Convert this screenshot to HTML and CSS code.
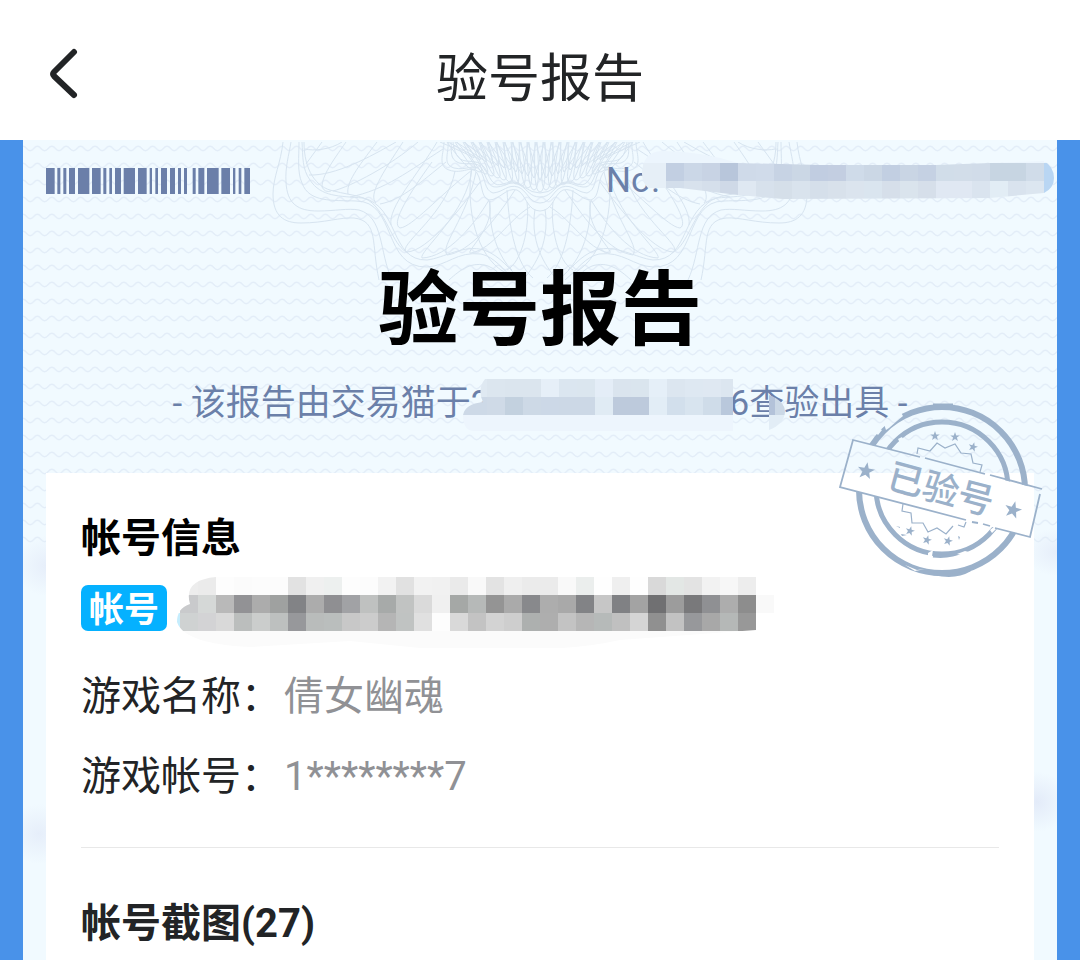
FILE: index.html
```
<!DOCTYPE html>
<html lang="zh-CN">
<head>
  <meta charset="UTF-8" />
  <meta name="viewport" content="width=device-width, initial-scale=1.0">
  <title>验号报告</title>
  <link rel="stylesheet" href="styles.css">
</head>
<body>
  <header class="navbar">
    <button type="button" class="back" aria-label="返回">
      <svg width="32" height="52" viewBox="0 0 32 52"><path d="M27 4 L7 24 Q5 26 7 28 L27 47" /></svg>
    </button>
    <h1>验号报告</h1>
  </header>

  <main class="report">
    <svg class="waves" aria-hidden="true">
      <defs>
        <pattern id="wave" width="14.4" height="17" patternUnits="userSpaceOnUse">
          <path d="M-3.600 8.500 Q0 4 3.600 8.500 T10.800 8.500 T18 8.500" />
        </pattern>
      </defs>
      <rect width="100%" height="100%" fill="url(#wave)" />
    </svg>
    <svg class="rosette" width="540" height="138" viewBox="270 142 540 138" aria-hidden="true">
      <defs>
        <g id="half">
          <!-- outer border -->
          <path d="M283 142 C281 162 273 178 273 194 C273 216 284 223 301 223 C325 223 340 217 354 218 C379 221 371 244 379 280" />
          <path d="M291 142 C289 155 285 167 286 182 C287 204 298 211 318 211 C335 211 348 208 359 210 C384 217 379 252 392 280" />
          <path d="M299 142 C299 157 297 172 302 183 C309 203 333 200 356 201 C397 201 382 268 427 267 C447 266 457 251 481 254 C495 257 503 270 515 280" />
          <path d="M302 142 C303 157 302 169 310 180 C321 197 339 196 363 198 C399 206 390 261 427 260 C444 258 464 244 484 250 C501 256 508 269 522 280" />
          <path d="M304 142 C304 170 316 188 334 191 C352 196 367 195 376 207 C390 224 394 246 408 253" />
          <path d="M449 280 C461 269 472 261 488 266 Q498 270 504 280" />
          <!-- inner border -->
          <path d="M444 142 C444 153 437 166 449 170 C463 175 472 164 477 173 C483 183 480 197 489 200 C500 200 506 187 517 190 C526 194 527 211 540 211" />
          <path d="M448 142 C449 154 442 164 454 168 C467 171 474 163 480 170 C486 179 484 190 493 193 C504 192 507 184 518 187 C527 190 529 203 540 203" />
          <path d="M451 142 C452 151 449 159 459 163 C469 165 478 161 482 169 C487 178 488 188 497 187 C507 186 510 180 520 185 C528 190 530 197 540 197" />
          <path d="M453 142 C454 151 457 160 466 161 C475 162 481 161 486 170 C491 181 494 187 503 184 C513 181 517 181 524 187 Q532 193 540 193" />
          <!-- lattice between the borders -->
          <path d="M342 142 C330 150 313 151 305 149" />
          <path d="M322 142 L306 164" />
          <path d="M346 142 C332 162 322 176 322 187 Q325 193 331 191" />
          <path d="M396 142 C370 157 335 176 309 175" />
          <path d="M377 142 C357 168 346 183 348 194" />
          <path d="M418 142 C390 166 352 186 333 191" />
          <path d="M403 142 C382 174 368 195 376 203" />
          <path d="M443 149 C409 171 385 190 350 197" />
          <path d="M437 142 C417 176 388 207 391 225" />
          <path d="M446 162 C422 181 402 200 380 204" />
          <path d="M432 162 C406 198 391 224 400 228 C412 227 439 196 472 170" />
          <path d="M455 171 C447 215 395 247 407 252 C428 251 461 208 480 182" />
          <path d="M472 168 C468 213 418 252 422 258 C448 257 474 225 489 200" />
          <path d="M476 172 C466 220 440 245 447 255 C470 252 494 222 515 190" />
          <path d="M489 201 C497 226 463 254 471 253 C493 249 508 220 530 207" />
          <path d="M471 172 C466 220 481 262 508 274" />
          <path d="M490 201 C488 229 499 258 512 270" />
          <path d="M507 190 C509 231 517 265 533 278" />
          <path d="M527 202 C530 227 522 262 507 270" />
          <path d="M545 209 C551 247 530 271 523 280" />
        </g>
      </defs>
      <use href="#half" />
      <use href="#half" transform="translate(1080 0) scale(-1 1)" />
      <g id="rays"></g>
    </svg>

    <div class="report-top">
      <svg class="barcode" width="204" height="26" viewBox="0 0 612 78" role="img" aria-label="条形码">
        <path d="M0 0h26v78h-26zM34 0h9v78h-9zM52 0h9v78h-9zM69 0h18v78h-18zM96 0h34v78h-34zM138 0h26v78h-26zM172 0h9v78h-9zM190 0h8v78h-8zM207 0h18v78h-18zM233 0h34v78h-34zM276 0h26v78h-26zM311 0h7v78h-7zM328 0h8v78h-8zM345 0h18v78h-18zM372 0h15v78h-15zM396 0h9v78h-9zM414 0h9v78h-9zM440 0h9v78h-9zM457 0h18v78h-18zM483 0h35v78h-35zM526 0h26v78h-26zM561 0h7v78h-7zM578 0h8v78h-8zM595 0h17v78h-17z" />
      </svg>
      <div class="serial">No.
        <svg class="mosaic" id="serialMosaic" width="420" height="60" viewBox="640 145 420 60" aria-hidden="true">
          <clipPath id="serialClip"><path d="M642 174 Q642 152 662 151 Q700 151 738 163 L820 165 L936 165 L990 163 L1044 161 Q1054 167 1054 178 Q1054 188 1044 193 L990 198 L783 199 L738 195 L680 188 L648 188 Q642 182 642 174" /></clipPath>
        </svg>
      </div>
    </div>

    <h2 class="report-title">验号报告</h2>
    <p class="issued">- 该报告由交易猫于2<span class="hidden-date">
      <svg class="mosaic" id="dateMosaic" width="340" height="60" viewBox="450 375 340 60" aria-hidden="true">
        <clipPath id="dateClip"><path d="M484 379 H732 V431 H472 Q462 430 462 415 Q464 404 482 402 Q476 389 484 379 M768 395 Q784 401 784 412 Q783 424 768 430z" /></clipPath>
      </svg></span>6查验出具 -</p>

    <section class="card">
      <svg class="stamp" width="220" height="190" viewBox="830 395 220 190" aria-hidden="true">
        <defs>
          <mask id="worn">
            <rect x="830" y="395" width="220" height="190" fill="#fff" />
            <path fill="#000" d="M853 440 L1042 490 L1030 537 L840 487z" />
            <path fill="#000" d="M884 424 L889 416 L891 419 L896 414 L900 411 L903 416 L897 421 L889 428 L886 430z M876 433l4-4 2 1-4 5z M898 439l4-2 2 4-4 2z M928 553l5-3-1 6-4 3z M957 554l8-3 4 1-8 3z M990 530l5-4 1 3-4 4z M1007 433l4-3-1 4z M905 565l12 5 8-1-10 2z M987 547l4-5 2 2-4 5z" />
          </mask>
          <path id="star" d="M0 -9 L2.200 -2.900 L8.600 -2.800 L3.500 1.100 L5.300 7.300 L0 3.700 L-5.300 7.300 L-3.500 1.100 L-8.600 -2.800 L-2.200 -2.900z" />
        </defs>
        <g mask="url(#worn)" class="rings">
          <circle cx="942" cy="490" r="83" stroke-width="6" />
          <circle cx="942" cy="488" r="66" stroke-width="5" />
          <path stroke-width="3" d="M905 563 Q922 573 942 575 Q958 577 970 570 M933 405 L953 405 M933 556 Q950 558 964 551" />
        </g>
        <path class="thin" d="M917 454 L918 448 L930 451 L937 443 L945 448 L955 444 L961 453 L971 454 L973 463 L982 465 L980 472 M903 504 L902 511 L911 513 L912 523 L923 523 L928 532 L937 528 L946 534 L953 526 M958 525 L964 527 L966 522" />
        <path class="thin frame" d="M1040 494 L1030 537 L995 528 M990 526 L983 524 M978 523 L972 522 M966 520 L840 487 L853 440 L920 457 M925 458 L985 474 M990 475 L1042 489" />
        <g class="solid">
          <use href="#star" transform="translate(866 471) rotate(10)" />
          <use href="#star" transform="translate(1013 510) rotate(15)" />
          <use href="#star" transform="translate(935 436) scale(.55)" />
          <use href="#star" transform="translate(955 437) scale(.55)" />
          <use href="#star" transform="translate(973 447) rotate(15) scale(.55)" />
          <use href="#star" transform="translate(910 531) rotate(15) scale(.55)" />
          <use href="#star" transform="translate(927 540) rotate(15) scale(.55)" />
          <use href="#star" transform="translate(948 541) rotate(15) scale(.55)" />
          <path d="M896 526l4 1v1zM901 534l6 1-5 1zM958 536l2 1-1 3z" />
          <text x="941" y="502" text-anchor="middle" transform="rotate(15 941 489)">已验号</text>
        </g>
      </svg>

      <h3 class="black">帐号信息</h3>
      <div class="account">
        <span class="badge">帐号</span>
        <svg class="account-mosaic" id="accountMosaic" width="620" height="80" viewBox="176 568 620 80" aria-hidden="true">
          <clipPath id="accountClip"><path d="M177 622 Q177 608 190 604 Q183 580 216 577 H780 V626 L756 630 L620 640 Q580 649 530 649 L420 648 L350 641 L250 647 Q184 644 177 622" /></clipPath>
        </svg>
      </div>
      <dl class="info">
        <div><dt>游戏名称：</dt><dd>倩女幽魂</dd></div>
        <div><dt>游戏帐号：</dt><dd>1********7</dd></div>
      </dl>
      <hr>
      <h3>帐号截图(27)</h3>
    </section>
  </main>
  <script src="script.js"></script>
</body>
</html>
```

FILE: styles.css
```
* {
  box-sizing: border-box;
}
body {
  margin: 0;
  min-height: 100vh;
  display: flex;
  flex-direction: column;
  background: #4992e9;
  color: #222426;
  font-family: Roboto, "Noto Sans CJK SC", sans-serif;
}
h1, h2, h3, p, dl, dd {
  margin: 0;
}
.navbar {
  display: grid;
  grid-template-columns: 80px 1fr 80px;
  align-items: center;
  height: 140px;
  padding-top: 20px;
  background: #fff;
}
.navbar h1 {
  font-size: 52px;
  font-weight: 400;
  line-height: 80px;
  text-align: center;
}
.back {
  height: 64px;
  padding: 0 0 12px 47px;
  border: none;
  background: none;
  cursor: pointer;
}
.back svg {
  display: block;
}
.back path {
  fill: none;
  stroke: #222426;
  stroke-width: 6;
  stroke-linecap: round;
}

.report {
  position: relative;
  flex: 1;
  display: flex;
  flex-direction: column;
  margin: 0 23px;
  padding: 21px 23px 0;
  background:
    radial-gradient(ellipse 32px 30px at 24px 426px, #e6eefa, transparent) no-repeat,
    radial-gradient(ellipse 32px 30px at 16px 694px, #e6eefa, transparent) no-repeat,
    radial-gradient(ellipse 32px 24px at 100% 412px, #e6eefa, transparent) no-repeat,
    radial-gradient(ellipse 32px 30px at calc(100% - 20px) 662px, #e3ebf9, transparent) no-repeat,
    #f1faff;
}
.waves {
  position: absolute;
  top: 0;
  left: 0;
  width: 100%;
  height: 407px;
}
.waves path {
  fill: none;
  stroke: #e3edf8;
  stroke-width: 1.3;
}
.rosette {
  position: absolute;
  top: 2px;
  left: calc(50% - 270px);
  fill: none;
  stroke: #d7e4f0;
}
.report-top {
  position: relative;
  display: flex;
  justify-content: space-between;
  align-items: center;
  height: 40px;
}
.barcode {
  fill: #6b7fa9;
}
.serial {
  position: relative;
  width: 428px;
  font-size: 35px;
  line-height: 36px;
  color: #6b80a9;
}
.mosaic {
  position: absolute;
}
.serial .mosaic {
  left: 34px;
  top: -18px;
}
.report-title {
  position: relative;
  margin-top: 60px;
  font-size: 81px;
  line-height: 100px;
  text-align: center;
  color: #000;
}
.issued {
  position: relative;
  height: 50px;
  margin-top: 18px;
  font-size: 35px;
  line-height: 50px;
  text-align: center;
  white-space: nowrap;
  color: #6b80a9;
}
.hidden-date {
  position: relative;
  display: inline-block;
  width: 239px;
}
.hidden-date .mosaic {
  left: -40px;
  top: -40px;
}

.card {
  position: relative;
  flex: 1;
  margin-top: 44px;
  padding: 35px 35px 0;
  background: #fff;
}
.card h3 {
  font-size: 40px;
  line-height: 62px;
}
.card .black {
  color: #000;
}
.stamp {
  position: absolute;
  top: -78px;
  right: -16px;
}
.rings, .thin {
  fill: none;
  stroke: #9bb1ca;
}
.thin {
  stroke-width: 1.2;
}
.frame {
  stroke-width: 1.8;
}
.solid {
  fill: #9bb1ca;
  font-size: 36px;
  font-weight: 500;
}
.account {
  position: relative;
  margin-top: 15px;
  height: 46px;
}
.badge {
  display: block;
  width: 86px;
  height: 46px;
  border-radius: 7px;
  background: #05b1ff;
  color: #fff;
  font-size: 35px;
  font-weight: 700;
  line-height: 52px;
  text-align: center;
}
.account-mosaic {
  position: absolute;
  left: 95px;
  top: -17px;
}
.info {
  margin-top: 26px;
  font-size: 40px;
  line-height: 80px;
}
.info div {
  display: flex;
  gap: 3px;
}
.info dd {
  color: #909195;
}
hr {
  height: 1px;
  margin: 30px 0 45px;
  border: none;
  background: #e8e8e8;
}
```

FILE: script.js
```
const CELL = 18;

const serialRows = [
  Array(23).fill('ecf5fd'),
  'e6eff7 e6eff7 c2cfe2 cbd7e7 c8d3e4 b8c6db cfdae9 d0dbea c7d3e4 cbd7e5 c1cde1 c3cee1 cfdbe9 cbd7e5 c2cfe2 c9d5e4 c5d1e3 d1dde9 d2dde9 d1dce9 c7d5e2 c7d5e2 d0dce9 b9d6f3'.split(' '),
  'e6eff7 e6eff7 d3deeb d8e2ed d5dfeb cfd9e7 dfe8f2 d7e1ec d5dfe9 d9e3ed d5dfea d8e1eb dbe4ee dae5ef d6dfea dae4ed d6dfea e0e8f3 e0e8f3 dae4ef e2edf5 d9e3ee dce6f0 b9d6f3'.split(' ')
];

const dateRows = [
  'dfe9f2 dfe9f2 dce6ef dbe5ee dbe5ee e6eff8 dbe6f0 dbe6ef e4edf7 dae4ee dae5ee e5eff8 dce6f0 dee8f2 dfe8f2 dce6f0 edf5fd b3c2d9 cbd8e6'.split(' '),
  'cdd9e7 cdd9e7 cfdae7 c3d1df cdd9e6 ccd8e7 ccd8e6 ccd8e6 e0ebf4 bdcadc bdcadc e2edf6 d2dfec d8e4ef cfdce9 b9c8dc edf5fd b3c2d9 cbd8e6'.split(' '),
  Array(17).fill('edf5fd').concat('e2edf6', 'e2edf6')
];

const accountRows = [
  'ededed ebebeb fdfdfd fbfbfb fcfcfc fcfcfc e2e2e2 f0f0f0 edf0ef fdfdfd fcfcfc f2f2f2 e1e1e1 f2f2f2 f1f1f1 eaeaea f9f9f9 e3e3e3 efefef ebebeb ebebeb f9f9f9 ebeeed fefefe efefef fefefe d9d9d9 e3e7e5 e3e3e3 f2f2f2 f7f7f7 ededed'.split(' '),
  'c9cacc d5d8d7 b9b9b9 929295 acacac 9fa1a0 828386 acacac 8f8f92 a1a2a5 bfc1c0 a7aaa9 c1c3c2 dadada f0f0f0 a5a8a6 b6b9b8 949494 aaaaaa 88898c adadad a9a9a9 828386 c6c6c6 808184 a3a3a3 707072 9c9c9c 79797b 8f9093 adadad 8d8d8d f9f9f9'.split(' '),
  'cfd2d2 d3d3d5 d9d9d9 bbbebd cbcdcc bdc0bf 97989b b9bcbb babebd c8c8c8 cccccc b5b5b5 c0c3c2 e0e0e0 fdfdfd d9d9d9 c3c3c3 d3d3d3 cecece adb0af aeaeae c3c3c3 b6b6b6 b6bab9 c0c0c0 d5d5d5 909090 c2c2c2 97989b a8a8a8 b5b8b7 989898'.split(' '),
  Array(32).fill('fbfbfb')
];

function addShape(parent, name, attrs) {
  const el = document.createElementNS('http://www.w3.org/2000/svg', name);
  for (const key in attrs) el.setAttribute(key, attrs[key]);
  parent.appendChild(el);
  return el;
}

function drawMosaic(id, clip, rows, left, top) {
  const group = addShape(document.getElementById(id), 'g', { 'clip-path': `url(#${clip})`, 'shape-rendering': 'crispEdges' });
  rows.forEach((row, r) => {
    row.forEach((color, c) => {
      addShape(group, 'rect', { x: left + c * CELL, y: top + r * CELL, width: CELL, height: CELL, fill: '#' + color });
    });
  });
  return group;
}

drawMosaic('serialMosaic', 'serialClip', serialRows, 630, 145);
drawMosaic('dateMosaic', 'dateClip', dateRows, 450, 379);
const account = drawMosaic('accountMosaic', 'accountClip', accountRows, 180, 577);
addShape(account, 'rect', { x: 176, y: 613, width: 4, height: 18, fill: '#c5edfd' });

// crossing rays in the middle of the rosette
const rays = document.getElementById('rays');
for (let i = -11; i <= 11; i++) {
  const x = 540 + i * 8;
  const end = 192 - Math.abs(i) * 2;
  const endX = 540 + i * 6;
  addShape(rays, 'path', { d: `M${x - 5} 142 Q${endX - 7} ${end} ${endX} ${end} Q${endX + 7} ${end} ${x + 5} 142` });
  addShape(rays, 'path', { d: `M${x - 12} 142 Q${endX - 2} ${end - 14} ${endX} ${end - 12} Q${endX + 2} ${end - 14} ${x + 12} 142` });
}
```
